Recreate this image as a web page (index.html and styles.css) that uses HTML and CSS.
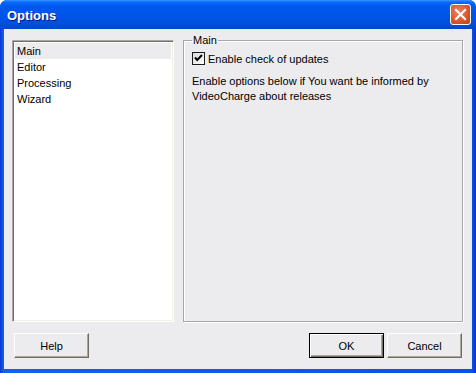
FILE: index.html
```html
<!DOCTYPE html>
<html lang="en">
<head>
    <meta charset="UTF-8">
    <title>Options</title>
    <link rel="stylesheet" href="styles.css">
</head>
<body>
    <div class="window">
        <div class="titlebar">
            <span class="title">Options</span>
            <span class="close-btn">
                <svg width="13" height="13" viewBox="0 0 13 13">
                    <path d="M2 2 L11 11 M11 2 L2 11" stroke="#fff" stroke-width="2.2" stroke-linecap="square"/>
                </svg>
            </span>
        </div>

        <div class="client">
            <div class="main-row">
                <ul class="listbox">
                    <li class="selected">Main</li>
                    <li>Editor</li>
                    <li>Processing</li>
                    <li>Wizard</li>
                </ul>

                <fieldset class="groupbox">
                    <legend>Main</legend>
                    <label class="check-row">
                        <span class="checkbox">
                            <svg width="11" height="11" viewBox="0 0 11 11">
                                <path d="M2 4.5 L4.2 7 L9 2" fill="none" stroke="#000" stroke-width="2"/>
                            </svg>
                        </span>
                        Enable check of updates
                    </label>
                    <p class="note">Enable options below if You want be informed by VideoCharge about releases</p>
                </fieldset>
            </div>

            <div class="button-row">
                <button class="btn">Help</button>
                <span class="spacer"></span>
                <button class="btn default">OK</button>
                <button class="btn">Cancel</button>
            </div>
        </div>
    </div>
</body>
</html>
```

FILE: styles.css
```css
body {
    margin: 0;
    background-color: #fff;
    font-family: "Liberation Sans", Arial, sans-serif;
    font-size: 11px;
    color: #000;
}

.window {
    width: 476px;
    height: 373px;
    display: flex;
    flex-direction: column;
    background: linear-gradient(to right, #0831d9, #0d52e0 2px, #1660ea 4px, #0d52e0 472px, #0831d9);
    border-radius: 7px 7px 0 0;
    overflow: hidden;
}

.titlebar {
    height: 29px;
    flex: none;
    display: flex;
    align-items: center;
    padding: 0 5px 0 7px;
    background: linear-gradient(to bottom, #3d95ff 0, #0a6bff 2px, #0058ee 6px, #0055e8 50%, #0050e0 80%, #0046c8 100%);
}

.title {
    flex: 1;
    color: #fff;
    font-weight: bold;
    font-size: 13px;
    text-shadow: 1px 1px #0a1883;
    padding-top: 2px;
}

.close-btn {
    width: 19px;
    height: 19px;
    border: 1px solid #fff;
    border-radius: 3px;
    background: radial-gradient(circle at 40% 35%, #ec8466, #d9542a 60%, #c13e14);
    display: flex;
    align-items: center;
    justify-content: center;
}

.client {
    flex: 1;
    margin: 0 4px 4px;
    background-color: #ecebee;
    padding: 11px 9px 0 8px;
    display: flex;
    flex-direction: column;
}

.main-row {
    display: flex;
    gap: 9px;
    height: 282px;
}

.listbox {
    width: 162px;
    margin: 0;
    padding: 2px;
    list-style: none;
    background-color: #fff;
    border: 1px solid;
    border-color: #a7a6aa #fff #fff #a7a6aa;
    box-shadow: inset 1px 1px #716f64, inset -1px -1px #f1efe2;
    box-sizing: border-box;
}

.listbox li {
    height: 16px;
    line-height: 16px;
    padding-left: 2px;
}

.listbox .selected {
    background-color: #ecebee;
}

.groupbox {
    flex: 1;
    margin: -6px 0 0;
    padding: 4px 9px 0 8px;
    border: 1px solid #a7a6aa;
    box-shadow: inset 1px 1px #fff, 1px 1px #fff;
    min-width: 0;
}

.groupbox legend {
    padding: 0 1px;
    margin-left: 0;
    line-height: 13px;
}

.check-row {
    display: flex;
    align-items: center;
    gap: 3px;
    height: 15px;
}

.checkbox {
    width: 11px;
    height: 11px;
    border: 1px solid #1c1c1c;
    background: linear-gradient(to bottom right, #dcdad5, #fff);
    display: flex;
    align-items: center;
    justify-content: center;
}

.note {
    margin: 8px 0 0;
    line-height: 15px;
    width: 250px;
}

.button-row {
    display: flex;
    gap: 3px;
    margin-top: 11px;
    padding: 0 1px 0 2px;
}

.spacer {
    flex: 1;
}

.btn {
    width: 75px;
    height: 25px;
    margin: 0;
    font-family: inherit;
    font-size: 11px;
    color: #000;
    background-color: #ecebee;
    border: 1px solid;
    border-color: #fff #716f64 #716f64 #fff;
    box-shadow: inset -1px -1px #aca899;
}

.btn.default {
    border: 1px solid #000;
    box-shadow: inset 1px 1px #fff, inset -1px -1px #716f64, inset -2px -2px #aca899;
}
```
